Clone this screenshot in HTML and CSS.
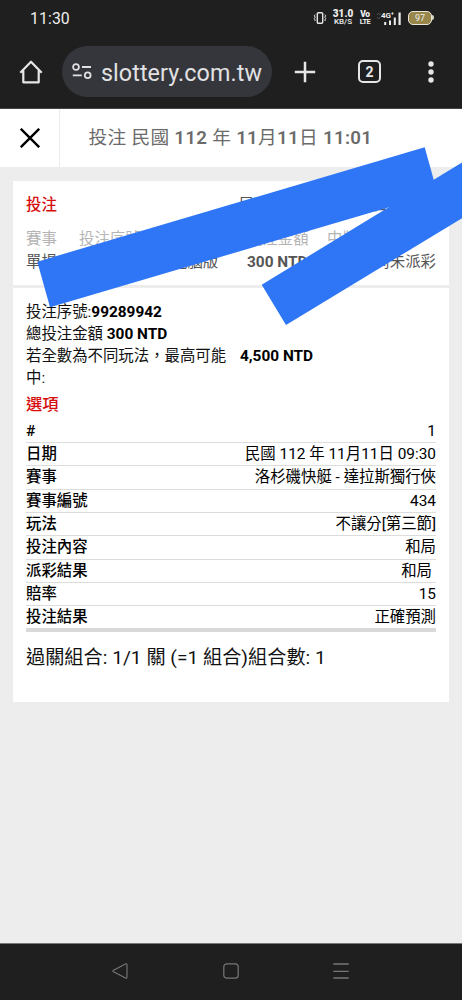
FILE: index.html
```html
<!DOCTYPE html>
<html lang="zh-Hant-TW">
<head>
<meta charset="utf-8">
<title>投注</title>
<link rel="stylesheet" href="styles.css">
</head>
<body>
<div class="screen">
  <div class="status">
    <span class="clock">11:30</span>
    <div class="tray">
      <svg class="vibrate" width="14" height="14" viewBox="0 0 14 14" fill="none" stroke="#e4e4e4"><rect x="4.300" y="1.700" width="5.400" height="10.600" rx="1" stroke-width="1.400"/><path d="M2.200 3.500l-.9 1.300.9 1.400-.9 1.400.9 1.400-.5 1M11.800 3.500l.9 1.300-.9 1.400.9 1.400-.9 1.400.5 1"/></svg>
      <div class="speed"><b>31.0</b><span>KB/S</span></div>
      <div class="volte"><b>Vo</b><span>LTE</span></div>
      <div class="signal">
        <svg width="24" height="15" viewBox="0 0 24 15"><path d="M0 4l1.700-2L3.400 4M0 6l1.700 2L3.400 6" fill="none" stroke="#555"/><path d="M7.200 11h2v3h-2zM12 9.500h2V14h-2zM16.800 6.500h2V14h-2zM21.500 1.500h2.200V14h-2.200z" fill="#eee"/></svg>
        <span class="net">4G⁺</span>
      </div>
      <div class="battery"><span>97</span></div>
    </div>
  </div>
  <div class="toolbar">
    <svg class="home" width="24" height="24" viewBox="0 0 24 24" fill="none" stroke="#e6e6e6" stroke-width="2.200" stroke-linejoin="round"><path d="M1.300 12.700L12 1.700l10.700 11M4.300 10.500v11.800h15.400V10.500"/></svg>
    <div class="address">
      <svg width="20" height="17" viewBox="0 0 20 17" fill="none" stroke="#e0e0e2" stroke-width="1.800"><circle cx="4" cy="4" r="2.900"/><path d="M10 4h9M.8 12.300h9"/><circle cx="15.700" cy="12.300" r="2.900"/></svg>
      <span>slottery.com.tw</span>
    </div>
    <svg class="plus" width="22" height="22" viewBox="0 0 22 22" stroke="#e6e6e6" stroke-width="2.500"><path d="M11 .8v20.400M.8 11h20.400"/></svg>
    <div class="tabs">2</div>
    <svg class="more" width="8" height="22" viewBox="0 0 8 22" fill="#e6e6e6"><circle cx="4" cy="3" r="2.700"/><circle cx="4" cy="11" r="2.700"/><circle cx="4" cy="19" r="2.700"/></svg>
  </div>
  <div class="titlebar">
    <div class="close"><svg width="20" height="20" viewBox="0 0 20 20" stroke="#000" stroke-width="2.400"><path d="M.8.8l18.400 18.400M19.200.8L.8 19.200"/></svg></div>
    <h1>投注 民國 <b>112</b> 年 <b>11</b>月<b>11</b>日 <b>11:01</b></h1>
  </div>
  <main class="content">
    <section class="summary">
      <div class="summary-head"><b class="red">投注</b><span class="when">民國 112 年 11月11日 11:01</span></div>
      <div class="cols names"><span>賽事</span><span>投注序號</span><span></span><span>投注金額</span><span>中獎金額</span></div>
      <div class="cols values"><span>單場</span><span></span><span class="device">電腦版</span><b>300 NTD</b><span class="end">尚未派彩</span></div>
    </section>
    <section class="detail">
      <p>投注序號:<b>99289942</b></p>
      <p>總投注金額 <b>300 NTD</b></p>
      <div class="maximum"><p>若全數為不同玩法，最高可能中:</p><b>4,500 NTD</b></div>
      <h2 class="red">選項</h2>
      <dl>
        <div><dt>#</dt><dd>1</dd></div>
        <div><dt>日期</dt><dd>民國 112 年 11月11日 09:30</dd></div>
        <div><dt>賽事</dt><dd>洛杉磯快艇 - 達拉斯獨行俠</dd></div>
        <div><dt>賽事編號</dt><dd>434</dd></div>
        <div><dt>玩法</dt><dd>不讓分[第三節]</dd></div>
        <div><dt>投注內容</dt><dd>和局</dd></div>
        <div><dt>派彩結果</dt><dd class="spaced">和局</dd></div>
        <div><dt>賠率</dt><dd>15</dd></div>
        <div><dt>投注結果</dt><dd>正確預測</dd></div>
      </dl>
      <p class="combo">過關組合: 1/1 關 (=1 組合)組合數: 1</p>
    </section>
  </main>
  <nav class="navbar">
    <svg width="16" height="16" viewBox="0 0 16 16" fill="none" stroke="#777" stroke-width="1.100" stroke-linejoin="round"><path d="M1.500 7.200L13.500.9q1.500-.5 1.500 1v12.200q0 1.500-1.500 1L1.500 8.800q-1.300-.8 0-1.600z"/></svg>
    <svg width="16" height="16" viewBox="0 0 16 16" fill="none" stroke="#777" stroke-width="1.200"><rect x=".8" y=".8" width="14.400" height="14.400" rx="3"/></svg>
    <svg width="16" height="16" viewBox="0 0 16 16" stroke="#777" stroke-width="1.300"><path d="M.3 1h15.400M.3 8.300h15.400M.3 15h15.400"/></svg>
  </nav>
  <svg class="marks" width="462" height="1000" viewBox="0 0 462 1000" fill="#2f76f6"><path d="M37.300 261.700L424.700 147.300l12.700 45.600L50 307.300z"/><path d="M261.700 284.700L462 162.500v55.700L286 325z"/></svg>
</div>
</body>
</html>
```

FILE: styles.css
```css
* { box-sizing: border-box; }
body { margin: 0; font-family: Roboto, "Noto Sans CJK TC", sans-serif; color: #111; background: #ededed; }
h1, h2, p, dl, dd { margin: 0; }
svg { display: block; flex: none; }
.screen { position: relative; width: 462px; height: 1000px; overflow: hidden; display: flex; flex-direction: column; }
.status { height: 36px; background: #1f1f1f; display: flex; justify-content: space-between; align-items: center; padding: 0 29px 0 30px; color: #eee; flex: none; }
.clock { font-size: 15.8px; letter-spacing: .1px; }
.tray { display: flex; align-items: center; }
.speed, .volte { display: flex; flex-direction: column; align-items: center; line-height: 8px; font-weight: 700; }
.speed { width: 20px; margin-left: 6px; }
.speed b { font-size: 10px; }
.speed span { font-size: 8px; font-weight: 500; }
.volte { width: 10px; margin-left: 7px; font-size: 8.5px; letter-spacing: -.4px; }
.volte span { font-size: 7.5px; letter-spacing: -.6px; }
.signal { position: relative; margin-left: 7px; }
.net { position: absolute; left: 4px; top: 0; font-size: 8px; line-height: 9px; font-weight: 700; letter-spacing: -.2px; }
.battery { position: relative; margin-left: 7px; margin-right: 1px; width: 24px; height: 14px; border: 1.5px solid #e8e4d8; border-radius: 5px; background: #98864a; display: flex; align-items: center; justify-content: center; font-size: 9px; color: #eee; }
.battery::after { content: ""; position: absolute; right: -3px; top: 3px; width: 2px; height: 5px; border-radius: 0 2px 2px 0; background: #d8d4c8; }
.toolbar { height: 73px; padding: 0 27px 1px 19px; background: #1f1f1f; border-bottom: 1px solid #454345; display: flex; align-items: center; flex: none; }
.address { width: 210px; height: 51px; margin-left: 19px; padding-left: 10px; border-radius: 26px; background: #35363b; display: flex; align-items: center; gap: 9px; color: #e2e2e4; font-size: 23.3px; letter-spacing: .08px; white-space: nowrap; }
.address span { padding-top: 2px; }
.plus { margin-left: 22px; }
.tabs { width: 23px; height: 23px; margin-left: 42px; border: 2px solid #e6e6e6; border-radius: 5px; color: #e6e6e6; display: flex; align-items: center; justify-content: center; font-size: 14px; font-weight: 700; }
.more { margin-left: auto; }
.titlebar { height: 58px; background: #fff; display: flex; flex: none; }
.close { width: 60px; padding-left: 1px; border-right: 1px solid #ececec; display: flex; align-items: center; justify-content: center; }
h1 { margin-left: 28.5px; font-size: 18.7px; font-weight: 400; line-height: 59px; color: #6b6b6b; letter-spacing: .3px; white-space: nowrap; }
h1 b { font-weight: 600; }
.content { flex: 1; padding: 14px 13px; display: flex; flex-direction: column; gap: 3px; }
.summary, .detail { background: #fff; padding: 0 13px; font-size: 15.4px; }
.summary { height: 104px; padding-top: 13px; color: #555; }
.summary-head { display: flex; justify-content: space-between; line-height: 23px; }
.when { width: 197px; white-space: nowrap; }
.red { color: #d60d0d; font-weight: 500; }
.cols { display: grid; grid-template-columns: 53px 88px 80px 80px 1fr; line-height: 23px; white-space: nowrap; }
.names { margin-top: 11px; color: #b5b5b5; }
.values { line-height: 22px; }
.values b { font-weight: 700; }
.device { padding-left: 5px; }
.end { text-align: right; }
.detail { height: 414px; padding-top: 12.5px; line-height: 22.1px; }
.detail p b, .maximum b { font-weight: 700; color: #000; }
.maximum { display: flex; }
.maximum p { width: 214px; }
h2 { font-size: 16.3px; line-height: 28px; margin-top: 2px; }
dl { padding-top: 1px; }
dl div { height: 23.3px; line-height: 23.5px; border-bottom: 1.5px solid #dcdcdc; display: flex; justify-content: space-between; color: #000; }
dl div:last-child { height: 26px; border-bottom: 4px solid #d9d9d9; }
dt { font-weight: 500; }
.spaced { padding-right: 4px; }
.combo { margin-top: 11px; font-size: 19.2px; line-height: 30px; white-space: nowrap; }
.navbar { height: 57px; background: #1f1f1f; border-top: 1px solid #777; padding: 0 113px 2px 112px; display: flex; justify-content: space-between; align-items: center; flex: none; }
.marks { position: absolute; left: 0; top: 0; }
```
